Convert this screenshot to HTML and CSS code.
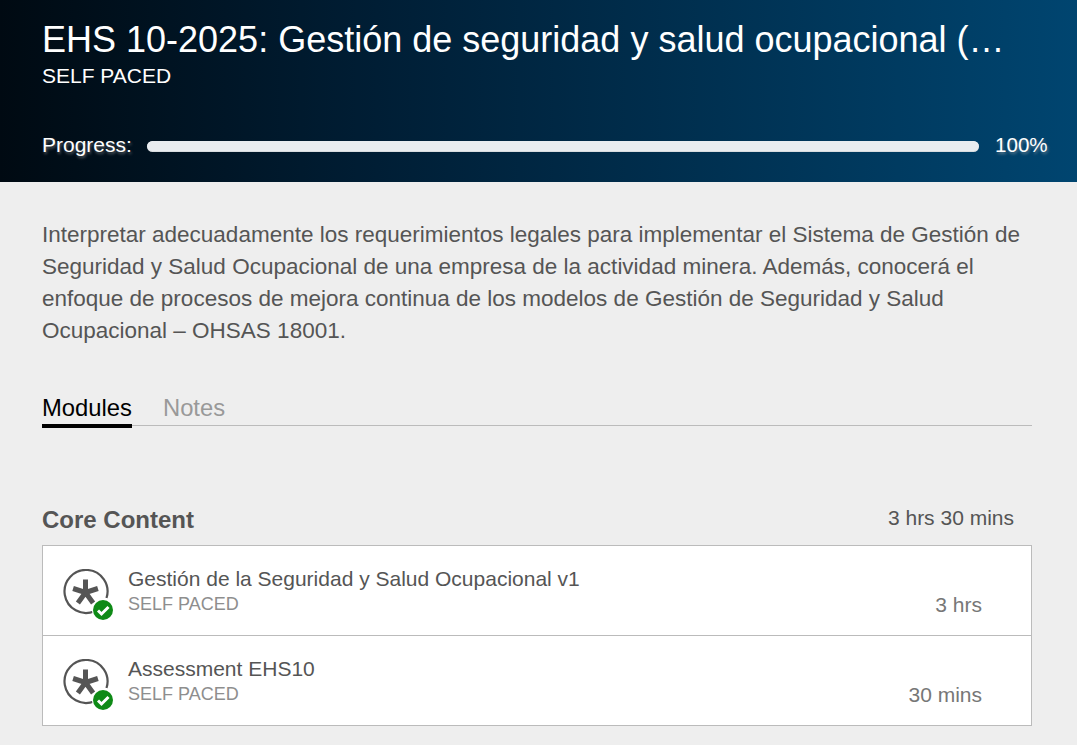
FILE: index.html
```html
<!DOCTYPE html>
<html lang="es">
<head>
<meta charset="utf-8">
<title>EHS 10-2025</title>
<link rel="stylesheet" href="styles.css">
</head>
<body>
<header class="hero">
  <h1 class="hero-title">EHS 10-2025: Gestión de seguridad y salud ocupacional (…</h1>
  <div class="hero-type">SELF PACED</div>
  <div class="progress">
    <span class="progress-label">Progress:</span>
    <div class="progress-track"><div class="progress-fill"></div></div>
    <span class="progress-value">100%</span>
  </div>
</header>
<main class="content">
  <p class="description">Interpretar adecuadamente los requerimientos legales para implementar el Sistema de Gestión de Seguridad y Salud Ocupacional de una empresa de la actividad minera. Además, conocerá el enfoque de procesos de mejora continua de los modelos de Gestión de Seguridad y Salud Ocupacional – OHSAS 18001.</p>
  <nav class="tabs">
    <a class="tab tab-active">Modules</a>
    <a class="tab">Notes</a>
  </nav>
  <section class="section">
    <div class="section-head">
      <h2 class="section-title">Core Content</h2>
      <span class="section-time">3 hrs 30 mins</span>
    </div>
    <ul class="modules">
      <li class="module">
        <span class="module-icon">
          <svg width="46" height="46" viewBox="0 0 46 46">
            <path class="ring" d="M31.5 42.2A21.5 21.5 0 1 1 43.5 29"/>
            <path class="star" d="M22.5 23.5V10.5M22.5 23.5L34.9 19.5M22.5 23.5L10.1 19.5M22.5 23.5L30.1 34M22.5 23.5L14.9 34"/>
          </svg>
          <span class="badge"><svg width="20" height="20" viewBox="0 0 20 20"><circle class="badge-bg" cx="10" cy="10" r="10"/><path class="badge-check" d="M5 10.5l3.5 3.5L15.5 7"/></svg></span>
        </span>
        <div class="module-text">
          <div class="module-name">Gestión de la Seguridad y Salud Ocupacional v1</div>
          <div class="module-type">SELF PACED</div>
        </div>
        <span class="module-time">3 hrs</span>
      </li>
      <li class="module">
        <span class="module-icon">
          <svg width="46" height="46" viewBox="0 0 46 46">
            <path class="ring" d="M31.5 42.2A21.5 21.5 0 1 1 43.5 29"/>
            <path class="star" d="M22.5 23.5V10.5M22.5 23.5L34.9 19.5M22.5 23.5L10.1 19.5M22.5 23.5L30.1 34M22.5 23.5L14.9 34"/>
          </svg>
          <span class="badge"><svg width="20" height="20" viewBox="0 0 20 20"><circle class="badge-bg" cx="10" cy="10" r="10"/><path class="badge-check" d="M5 10.5l3.5 3.5L15.5 7"/></svg></span>
        </span>
        <div class="module-text">
          <div class="module-name">Assessment EHS10</div>
          <div class="module-type">SELF PACED</div>
        </div>
        <span class="module-time">30 mins</span>
      </li>
    </ul>
  </section>
</main>
</body>
</html>
```
FILE: styles.css
```css
* { box-sizing: border-box; }
html, body { margin: 0; height: 100%; }
body {
  background: #eeeeee;
  font-family: "Liberation Sans", Arial, sans-serif;
  color: #555555;
  overflow: hidden;
}
.hero {
  height: 182px;
  padding: 19px 30px 0 42px;
  background: linear-gradient(to right, #000a12 0%, #001e35 35%, #004570 100%);
  color: #ffffff;
}
.hero-title {
  margin: 0;
  font-size: 36px;
  font-weight: 400;
  line-height: 42px;
  white-space: nowrap;
}
.hero-type {
  font-size: 21px;
  line-height: 24px;
  margin-top: 3px;
}
.progress {
  display: flex;
  align-items: center;
  margin-top: 45px;
  font-size: 21px;
  line-height: 24px;
  text-shadow: 1px 2px 3px rgba(170, 170, 170, 0.55);
}
.progress-label { width: 89px; white-space: nowrap; }
.progress-value { width: 52px; font-size: 20.6px; white-space: nowrap; }
.progress-track {
  flex: 1;
  height: 11px;
  margin: 2px 16px 0;
  border-radius: 6px;
  background: #d8dcdf;
  overflow: hidden;
}
.progress-fill {
  width: 100%;
  height: 10px;
  border-radius: 6px;
  background: #e9edf0;
}
.content {
  padding: 37px 45px 0 42px;
}
.description {
  margin: 0;
  font-size: 22.5px;
  line-height: 32px;
}
.tabs {
  display: flex;
  gap: 31px;
  margin-top: 47px;
  height: 32px;
  border-bottom: 1px solid #bbbbbb;
}
.tab {
  height: 34px;
  font-size: 23.8px;
  line-height: 28px;
  color: #999999;
}
.tab-active {
  color: #000000;
  border-bottom: 4px solid #000000;
}
.section { margin-top: 73px; }
.section-head {
  display: flex;
  justify-content: space-between;
  padding-right: 18px;
  height: 46px;
}
.section-title {
  margin: -1px 0 0;
  font-size: 24px;
  font-weight: 700;
  line-height: 44px;
}
.section-time {
  font-size: 21px;
  line-height: 24px;
  margin-top: 7px;
}
.modules {
  list-style: none;
  margin: 0;
  padding: 0;
  background: #ffffff;
  border: 1px solid #bbbbbb;
}
.module {
  display: flex;
  align-items: flex-start;
  height: 89px;
  padding: 21px 49px 0 20px;
}
.module + .module { border-top: 1px solid #bbbbbb; height: 90px; }
.module-icon {
  position: relative;
  flex: none;
  width: 46px;
  height: 46px;
  margin-top: 2px;
  margin-right: 19px;
}
.ring { fill: none; stroke: #555555; stroke-width: 2.2; }
.star { fill: none; stroke: #555555; stroke-width: 5; }
.badge {
  position: absolute;
  right: -5px;
  bottom: -6px;
  width: 22px;
  height: 22px;
  padding: 1px;
  border-radius: 50%;
  background: #ffffff;
}
.badge svg { display: block; }
.badge-bg { fill: #0e8a16; }
.badge-check { fill: none; stroke: #ffffff; stroke-width: 3; }
.module-text { flex: 1; }
.module-name {
  font-size: 21px;
  line-height: 24px;
}
.module-type {
  font-size: 18px;
  line-height: 27px;
  color: #8e8e8e;
}
.module-time {
  margin-top: 26px;
  font-size: 21px;
  line-height: 24px;
  color: #777777;
}
```
